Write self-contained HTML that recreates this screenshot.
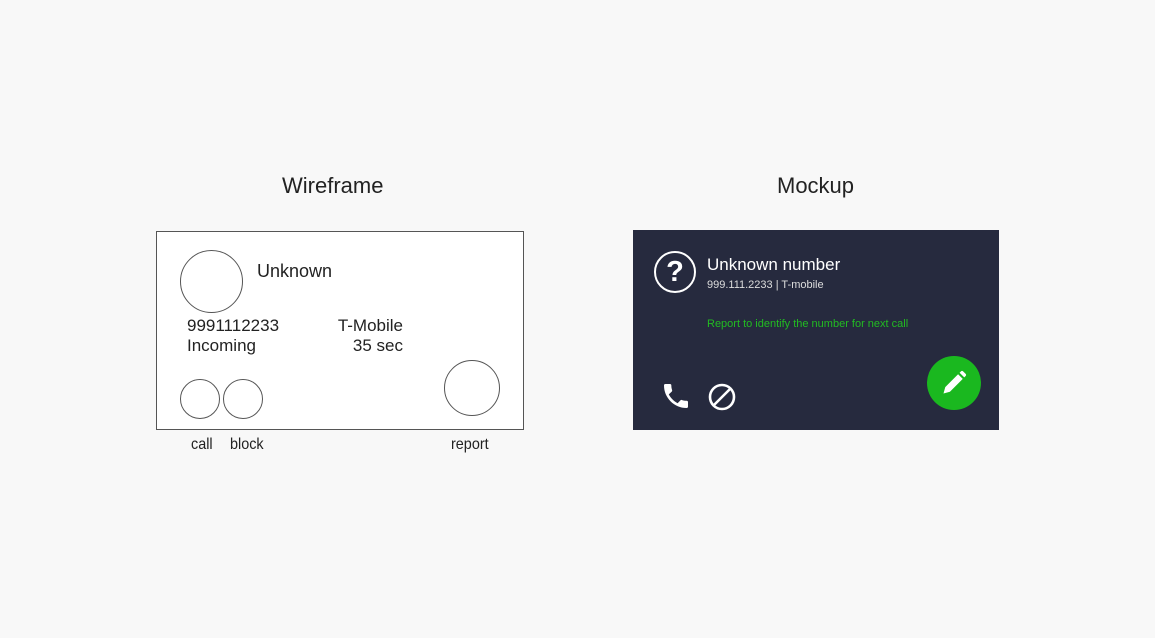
<html><head><style>
body{margin:0;width:1155px;height:638px;background:#f8f8f8;position:relative;font-family:"Liberation Sans",sans-serif;overflow:hidden}
.a{position:absolute;white-space:nowrap}
.c{position:absolute;border:1px solid #555;border-radius:50%;background:#fff;box-sizing:border-box}
.l{font-size:16px;color:#222;transform:scaleX(0.9);transform-origin:left}
</style></head><body>
<div class="a" style="left:282px;top:173px;font-size:22px;color:#222">Wireframe</div>
<div class="a" style="left:777px;top:173px;font-size:22px;color:#222">Mockup</div>
<div class="a" style="left:156px;top:231px;width:368px;height:199px;border:1px solid #555;background:#fff;box-sizing:border-box"></div>
<div class="c" style="left:180px;top:250px;width:63px;height:63px"></div>
<div class="c" style="left:180px;top:379px;width:40px;height:40px"></div>
<div class="c" style="left:223px;top:379px;width:40px;height:40px"></div>
<div class="c" style="left:444px;top:360px;width:56px;height:56px"></div>
<div class="a" style="left:257px;top:261px;font-size:18px;color:#222">Unknown</div>
<div class="a" style="left:187px;top:316px;font-size:17px;color:#222;line-height:20px">9991112233<br>Incoming</div>
<div class="a" style="left:300px;width:103px;text-align:right;top:316px;font-size:17px;color:#222;line-height:20px">T-Mobile<br>35 sec</div>
<div class="a l" style="left:191px;top:436px">call</div>
<div class="a l" style="left:230px;top:436px">block</div>
<div class="a l" style="left:451px;top:436px">report</div>
<div class="a" style="left:633px;top:230px;width:366px;height:200px;background:#262a3e"></div>
<div class="a" style="left:654px;top:251px;width:42px;height:42px;border:2.5px solid #fff;border-radius:50%;box-sizing:border-box;color:#fff;font-weight:bold;font-size:29px;text-align:center;line-height:38px">?</div>
<div class="a" style="left:707px;top:255px;font-size:17px;color:#fff">Unknown number</div>
<div class="a" style="left:707px;top:279px;font-size:11px;color:#ddd">999.111.2233 | T-mobile</div>
<div class="a" style="left:707px;top:318px;font-size:11px;color:#22bb22">Report to identify the number for next call</div>
<svg class="a" style="left:660px;top:380px" width="32" height="32" viewBox="0 0 24 24"><path fill="#fff" d="M6.6 10.8c1.4 2.8 3.8 5.1 6.6 6.6l2.2-2.2c.3-.3.7-.4 1-.2 1.1.4 2.3.6 3.6.6.6 0 1 .4 1 1V20c0 .6-.4 1-1 1C10.6 21 3 13.4 3 4c0-.6.4-1 1-1h3.5c.6 0 1 .4 1 1 0 1.3.2 2.5.6 3.6.1.3 0 .7-.2 1L6.6 10.8z"/></svg>
<svg class="a" style="left:708px;top:383px" width="28" height="28" viewBox="0 0 28 28"><circle cx="14" cy="14" r="12" fill="none" stroke="#fff" stroke-width="2.6"/><line x1="6" y1="22" x2="22" y2="6" stroke="#fff" stroke-width="2.6"/></svg>
<div class="a" style="left:927px;top:356px;width:54px;height:54px;border-radius:50%;background:#1ab81f"></div>
<svg class="a" style="left:940px;top:369px" width="28" height="28" viewBox="0 0 24 24"><path fill="#fff" d="M3 21l1.5-5.5L15.5 4.5l4 4L8.5 19.5z M16.8 3.2l1.2-1.2c.5-.5 1.3-.5 1.8 0l2.2 2.2c.5.5.5 1.3 0 1.8l-1.2 1.2z"/></svg>
</body></html>
